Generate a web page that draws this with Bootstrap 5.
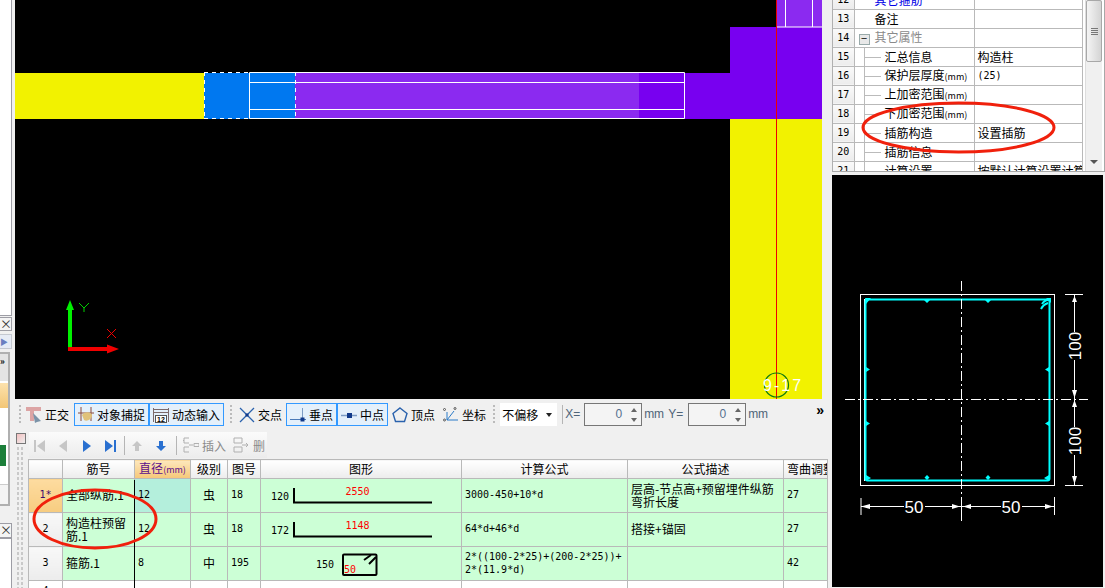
<!DOCTYPE html>
<html lang="zh-CN">
  <head>
    <meta charset="UTF-8" />
    <meta name="viewport" content="width=device-width, initial-scale=1.0" />
    <title>钢筋编辑</title>
    <link href="https://cdn.jsdelivr.net/npm/bootstrap@5.3.0/dist/css/bootstrap.min.css" rel="stylesheet" />
    <style>
      body { margin: 0; background: #f0f0f0; font-family: "Noto Sans CJK SC", "Liberation Sans", sans-serif; font-size: 12px; line-height: 13px; color: #000; }
      .app-frame { width: 1105px; height: 588px; overflow: hidden; background: #f0f0f0; }
      .app-marks { top: 0; left: 0; pointer-events: none; }
      .num { font-family: "DejaVu Sans Mono", "Noto Sans CJK SC", monospace; font-size: 10px; }

      /* left strip */
      .side-strip { width: 15px; flex: none; background: #f0f0f0; }
      .strip-white { height: 318px; width: 12px; background: #fff; border-right: 1px solid #9d9da5; border-bottom: 1px solid #9d9da5; }
      .strip-close { height: 15px; width: 12px; margin-top: 1px; background: #f4f4f4; border: 1px solid #9d9da5; border-left: 0; color: #333; font-size: 12px; line-height: 12px; text-align: center; }
      .strip-arrow { height: 15px; width: 12px; margin-top: 3px; background: #e6ebf5; border: 1px solid #c4c8d0; border-left: 0; color: #6a7fc0; font-size: 8px; line-height: 13px; }
      .strip-panel { height: 155px; width: 10px; margin-top: 3px; background: #fff; border: 2px solid #b0b0b0; border-left: 0; }
      .strip-more { height: 27px; background: #e4e4e4; font-size: 9px; line-height: 16px; font-weight: 700; }
      .strip-orange { height: 25px; margin-top: 2px; background: linear-gradient(#fde2ad, #f3c676); }
      .strip-green { height: 21px; width: 6px; margin-top: 37px; background: #1c7f3a; }
      .strip-box { height: 20px; margin-top: 18px; background: #f4f4f4; border-top: 1px solid #ccc; }
      .strip-close2 { margin-top: 17px; }
      .strip-white2 { height: 50px; width: 12px; background: #fff; border-right: 1px solid #9d9da5; border-top: 1px solid #9d9da5; }

      /* center */
      .center-col { width: 817px; flex: none; }
      .cad-view { display: block; background: #000; }
      .tool-row { height: 33px; padding: 0 0 2px 4px; }
      .grip { width: 2px; height: 19px; margin-right: 1px; flex: none; background-image: linear-gradient(#bbb 50%, transparent 50%); background-size: 2px 4px; }
      .grip-a { margin-left: 6px; margin-right: 3px; }
      .grip-b { margin-left: 3px; margin-right: 3px; }
      .tb-btn { height: 23px; padding: 0 3px; gap: 3px; border: 1px solid transparent; flex: none; white-space: nowrap; }
      .tb-btn.on { border-color: #3399ff; background: #e4f0fb; }
      .tb-first { margin-right: 1px; }
      .combo-box { width: 57px; height: 23px; margin-left: 2px; padding-left: 2px; background: #fff; flex: none; }
      .combo-caret { width: 0; height: 0; margin-left: auto; margin-right: 5px; border: 3px solid transparent; border-top: 4px solid #222; border-bottom: 0; }
      .tb-sep { width: 1px; height: 19px; background: #b5b5b5; flex: none; }
      .sep-combo { margin: 0 2px 0 5px; }
      .spin-box { width: 58px; height: 23px; border: 1px solid #777; background: #f4f4f4; color: #55708f; font-family: "Liberation Sans", sans-serif; font-size: 12px; flex: none; }
      .spin-value { flex: 1; text-align: right; padding-right: 4px; }
      .spin-arrows { width: 15px; gap: 6px; }
      .spin-up { width: 0; height: 0; border: 3px solid transparent; border-bottom: 4px solid #666; border-top: 0; }
      .spin-dn { width: 0; height: 0; border: 3px solid transparent; border-top: 4px solid #666; border-bottom: 0; }
      .unit-text { color: #4f6478; font-family: "Liberation Sans", sans-serif; font-size: 12px; flex: none; }
      .label-x { width: 19px; margin-right: 0; }
      .unit-mm { width: 26px; padding-left: 2px; }
      .label-y { width: 20px; }
      .unit-last { width: 70px; padding-left: 2px; }
      .more-chevron { font-size: 14px; font-weight: 700; margin-bottom: 8px; font-family: "Liberation Sans", sans-serif; }

      /* grid panel */
      .grid-panel { height: 156px; }
      .dock-side { width: 13px; flex: none; padding: 1px 0 0 1px; }
      .dock-close { width: 10px; height: 11px; background: linear-gradient(135deg, #f4c0c0, #eee); border: 1px solid #777; display: block; }
      .dock-dots { width: 9px; height: 150px; margin-top: 2px; background-image: radial-gradient(#c9c9c9 1px, transparent 1.2px); background-size: 4px 5px; }
      .grid-bar { width: 238px; height: 26px; margin: 0 0 1px 1px; padding-left: 2px; background: linear-gradient(#fbfbfb, #ececec); color: #8a8a8a; white-space: nowrap; }
      .bar-item { width: 24px; flex: none; }
      .bar-sep { margin: 0 6px 0 4px; }
      .bar-item-sm { width: 17px; }
      .bar-text { margin-left: 3px; margin-right: 7px; flex: none; }
      .bar-text-end { margin-left: 4px; flex: none; }

      .table.rebar-table { width: 799px; margin: 1px 0 0; table-layout: fixed; border-collapse: collapse; color: #000; }
      .table.rebar-table th, .table.rebar-table td { padding: 0 0 0 3px; height: 34px; border: 1px solid #b9b9b9; background: #ccffd6; color: #000; font-weight: 400; vertical-align: middle; overflow: hidden; line-height: 12.5px; box-shadow: none; }
      .table.rebar-table thead th { height: 19px; background: linear-gradient(#fff, #ececec); text-align: center; padding: 0; white-space: nowrap; }
      .table.rebar-table .th-hot { background: linear-gradient(#fde8bd, #f6c778); color: #5a0f8a; }
      .table.rebar-table .th-left { text-align: left; padding-left: 3px; }
      .table.rebar-table td.row-head { background: linear-gradient(#f8f8f8, #ececec); text-align: center; padding: 0; }
      .table.rebar-table td.row-hot { background: linear-gradient(#fddca0, #f7cc80); color: #3a0a6a; }
      .table.rebar-table td.cell-hot { background: #b4efdc; }
      .table.rebar-table td.cell-center { text-align: center; padding: 0; }
      .table.rebar-table td.cell-shape { padding: 0; }
      .table.rebar-table tr.row-blank td { background: #fff; vertical-align: top; padding-top: 4px; }
      .col-a { width: 34px; } .col-b { width: 72px; } .col-c { width: 56px; } .col-d { width: 37px; } .col-e { width: 33px; }
      .col-f { width: 201px; } .col-g { width: 166px; } .col-h { width: 156px; } .col-i { width: 44px; }
      .shape-svg { display: block; }
      .shape-svg text { font-family: "DejaVu Sans Mono", monospace; font-size: 10px; }
      .mm-small { font-size: 9px; }

      /* right */
      .right-col { width: 273px; flex: none; background: #f0f0f0; }
      .prop-wrap { height: 172px; overflow: hidden; background: #fff; border-left: 1px solid #b0b0b0; border-bottom: 1px solid #a8a8a8; border-right: 1px solid #a8a8a8; }
      .table.prop-table { width: 250px; margin: -10px 0 0; table-layout: fixed; border-collapse: collapse; flex: none; }
      .table.prop-table td { height: 19px; padding: 0 0 0 3px; border: 1px solid #b9b9b9; border-left: 0; border-top: 0; background: #fff; color: #000; white-space: nowrap; overflow: hidden; vertical-align: middle; box-shadow: none; }
      .table.prop-table td.prop-no { width: 21px; text-align: center; padding: 0; background: linear-gradient(#fafafa, #ececec); }
      .table.prop-table td.prop-name { width: 120px; padding-left: 20px; }
      .table.prop-table td.prop-group { padding-left: 20px; color: #8a8a8a; }
      .table.prop-table td.prop-link { color: #0000e6; }
      .table.prop-table td.prop-tree { padding-left: 30px; background-image: linear-gradient(#bbb, #bbb), linear-gradient(#bbb, #bbb); background-size: 1px 100%, 16px 1px; background-position: 9px 0, 10px 9px; background-repeat: no-repeat; }
      .minus-box { display: inline-block; width: 11px; height: 11px; margin: 0 5px 0 -16px; border: 1px solid #9aa; background: #e8e8e8; line-height: 7px; text-align: center; font-size: 11px; color: #000; vertical-align: -1px; }
      .prop-scroll { width: 17px; margin-left: 2px; flex: none; background: #f0f0f0; border-left: 1px solid #ddd; }
      .scroll-thumb { height: 62px; background: linear-gradient(90deg, #f4f4f4, #d4d4d4); border: 1px solid #a8a8a8; border-radius: 2px; gap: 1px; }
      .scroll-thumb i { display: block; width: 7px; height: 1px; background: #777; }
      .scroll-down { width: 0; height: 0; margin: auto auto 7px; border: 4px solid transparent; border-top: 4px solid #555; border-bottom: 0; }
      .section-view { display: block; margin-top: 3px; background: #000; }
      .section-view text { font-family: "Liberation Sans", sans-serif; font-size: 17px; fill: #fff; }
    </style>
  </head>
  <body>
    <div class="app-frame d-flex position-relative">

      <!-- left strip -->
      <div class="side-strip d-flex flex-column">
        <div class="strip-white"></div>
        <div class="strip-close">×</div>
        <div class="strip-arrow">▶</div>
        <div class="strip-panel">
          <div class="strip-more">»</div>
          <div class="strip-orange"></div>
          <div class="strip-green"></div>
          <div class="strip-box"></div>
        </div>
        <div class="strip-close strip-close2">×</div>
        <div class="strip-white2"></div>
      </div>

      <!-- center -->
      <div class="center-col d-flex flex-column">
        <svg class="cad-view" width="807" height="399" viewBox="15 0 807 399">
          <rect x="15" y="73" width="189" height="46" fill="#f2f200" />
          <rect x="204" y="73" width="91" height="46" fill="#0078f0" />
          <rect x="295" y="73" width="344" height="46" fill="#8b2af0" />
          <rect x="639" y="73" width="183" height="46" fill="#7800f0" />
          <rect x="730" y="27" width="92" height="46" fill="#7800f0" />
          <rect x="730" y="119" width="92" height="280" fill="#f2f200" />
          <rect x="776" y="0" width="46" height="27" fill="#8b2af0" />
          <g fill="none" stroke="#fff" stroke-width="1">
            <path d="M249.5 72.5H684.5V118.5H249.5Z M249.5 82.5H684.5 M249.5 109.5H684.5" />
            <path d="M204 72.5H249 M204 118.5H249 M204.5 72V119 M295.5 72V119" stroke-dasharray="4 4" />
            <path d="M785.5 0V27 M812.5 0V27 M776 27H822" />
          </g>
          <path d="M776.5 0V399" stroke="#f00000" stroke-width="1" />
          <circle cx="776.5" cy="385" r="12" fill="none" stroke="#0f7a0f" stroke-width="1.200" />
          <text x="763" y="391" font-family="Liberation Sans" font-size="16" letter-spacing="2" fill="#fff">9-17</text>
          <path d="M68 349V308H72V349Z M66 310L70 300L74 310Z" fill="#00f000" />
          <path d="M68 347H107V351H68Z M107 344.500L119 349L107 353.500Z" fill="#f00000" />
          <path d="M79 303L84 308L89 303 M84 308V312" stroke="#00d000" fill="none" />
          <path d="M107 329L116 338 M116 329L107 338" stroke="#f00000" fill="none" />
        </svg>

        <!-- snap toolbar -->
        <div class="tool-row d-flex align-items-center">
          <span class="grip"></span>
          <div class="tb-btn tb-first d-flex align-items-center">
            <svg width="16" height="16" viewBox="0 0 16 16"><path d="M0 0H15V4H8V14H4V4H0Z" fill="#dca4a4" /><path d="M7 6L15 14L11 15L9 16Z" fill="#7b93a8" /></svg>
            <span>正交</span>
          </div>
          <div class="tb-btn on d-flex align-items-center">
            <svg width="16" height="16" viewBox="0 0 16 16"><path d="M3 0V14 M13 0V14 M0 6H16" stroke="#8a4a3a" fill="none" /><path d="M4 8C7 4 13 5 14 8C14 12 9 15 6 13Z" fill="#e0c27a" /></svg>
            <span>对象捕捉</span>
          </div>
          <div class="tb-btn on d-flex align-items-center">
            <svg width="16" height="16" viewBox="0 0 16 16"><path d="M0.500 1V15 M15.500 1V15 M0 2.500H16 M0 5.500H16" stroke="#7d6a6a" fill="none" /><rect x="2.500" y="8.500" width="11" height="7" fill="#fff" stroke="#555" /><text x="8" y="14.500" font-size="7" font-weight="700" text-anchor="middle" font-family="Liberation Sans">12</text></svg>
            <span>动态输入</span>
          </div>
          <span class="grip grip-a"></span>
          <div class="tb-btn d-flex align-items-center">
            <svg width="16" height="16" viewBox="0 0 16 16"><path d="M1 1L15 15 M15 1L1 15" stroke="#2a62ad" stroke-width="1.300" /><rect x="6.500" y="6.500" width="3" height="3" fill="#123a8a" /></svg>
            <span>交点</span>
          </div>
          <div class="tb-btn on d-flex align-items-center">
            <svg width="16" height="16" viewBox="0 0 16 16"><path d="M0 12.500H16" stroke="#4a7ab8" /><path d="M12.500 1V12" stroke="#7d9cc4" /><rect x="10.500" y="10.500" width="4" height="4" fill="#123a8a" /></svg>
            <span>垂点</span>
          </div>
          <div class="tb-btn on d-flex align-items-center">
            <svg width="16" height="16" viewBox="0 0 16 16"><path d="M0 8.500H16" stroke="#7d9cc4" stroke-width="1.500" /><rect x="6" y="6" width="5" height="5" fill="#123a8a" /></svg>
            <span>中点</span>
          </div>
          <div class="tb-btn d-flex align-items-center">
            <svg width="16" height="16" viewBox="0 0 16 16"><path d="M8 1L15 6.500L12.500 14.500H3.500L1 6.500Z" fill="none" stroke="#2a62ad" stroke-width="1.400" /></svg>
            <span>顶点</span>
          </div>
          <div class="tb-btn d-flex align-items-center">
            <svg width="16" height="16" viewBox="0 0 16 16"><path d="M4 5V13H15 M4 13L11 4" stroke="#2a7ac8" fill="none" /><g fill="none" stroke="#555"><circle cx="1.500" cy="2.500" r="1" /><circle cx="12" cy="1.500" r="1" /><circle cx="1.500" cy="13" r="1" /></g></svg>
            <span>坐标</span>
          </div>
          <span class="grip grip-b"></span>
          <div class="combo-box d-flex align-items-center"><span>不偏移</span><span class="combo-caret"></span></div>
          <span class="tb-sep sep-combo"></span>
          <span class="unit-text label-x">X=</span>
          <div class="spin-box d-flex align-items-center"><span class="spin-value">0</span><span class="spin-arrows d-flex flex-column align-items-center"><i class="spin-up"></i><i class="spin-dn"></i></span></div>
          <span class="unit-text unit-mm">mm</span>
          <span class="unit-text label-y">Y=</span>
          <div class="spin-box d-flex align-items-center"><span class="spin-value">0</span><span class="spin-arrows d-flex flex-column align-items-center"><i class="spin-up"></i><i class="spin-dn"></i></span></div>
          <span class="unit-text unit-last">mm</span>
          <span class="more-chevron">»</span>
        </div>

        <!-- rebar grid -->
        <div class="grid-panel d-flex">
          <div class="dock-side">
            <span class="dock-close"></span>
            <div class="dock-dots"></div>
          </div>
          <div>
            <div class="grid-bar d-flex align-items-center">
              <span class="bar-item"><svg width="16" height="14" viewBox="0 0 16 14"><path d="M3 1H5V13H3Z M14 1V13L6 7Z" fill="#c6c6c6" /></svg></span>
              <span class="bar-item"><svg width="16" height="14" viewBox="0 0 16 14"><path d="M12 1V13L4 7Z" fill="#c6c6c6" /></svg></span>
              <span class="bar-item"><svg width="16" height="14" viewBox="0 0 16 14"><path d="M4 1V13L12 7Z" fill="#2a70d0" /></svg></span>
              <span class="bar-item bar-item-sm"><svg width="16" height="14" viewBox="0 0 16 14"><path d="M2 1V13L10 7Z M11 1H13V13H11Z" fill="#2a70d0" /></svg></span>
              <span class="tb-sep bar-sep"></span>
              <span class="bar-item"><svg width="12" height="12" viewBox="0 0 12 12"><path d="M6 1L11 6H8V11H4V6H1Z" fill="#c6c6c6" /></svg></span>
              <span class="bar-item bar-item-sm"><svg width="12" height="12" viewBox="0 0 12 12"><path d="M6 11L11 6H8V1H4V6H1Z" fill="#2a70d0" /></svg></span>
              <span class="tb-sep bar-sep"></span>
              <svg width="16" height="16" viewBox="0 0 16 16"><path d="M6 1H1V6H6 M1 3.500H0 M6 10H1V15H6 M6 8H10 M11 6.500H16V9.500H11Z" fill="none" stroke="#b0b0b0" /></svg>
              <span class="bar-text">插入</span>
              <svg width="16" height="16" viewBox="0 0 16 16"><path d="M1 1H9V6H1Z M1 10H9V15H1Z M9 8H15 M13 6L15 8L13 10" fill="none" stroke="#b0b0b0" /></svg>
              <span class="bar-text-end">删</span>
            </div>
            <table class="table rebar-table">
              <thead>
                <tr>
                  <th class="col-a"></th>
                  <th class="col-b">筋号</th>
                  <th class="col-c th-hot">直径<span class="mm-small">(mm)</span></th>
                  <th class="col-d">级别</th>
                  <th class="col-e">图号</th>
                  <th class="col-f">图形</th>
                  <th class="col-g">计算公式</th>
                  <th class="col-h">公式描述</th>
                  <th class="col-i th-left">弯曲调整</th>
                </tr>
              </thead>
              <tbody>
                <tr>
                  <td class="row-head row-hot num">1*</td>
                  <td>全部纵筋.1</td>
                  <td class="cell-hot num">12</td>
                  <td class="cell-center">虫</td>
                  <td class="num">18</td>
                  <td class="cell-shape">
                    <svg class="shape-svg" width="200" height="33" viewBox="0 0 200 33">
                      <text x="10" y="21">120</text>
                      <path d="M33 9V23.500H171" fill="none" stroke="#000" stroke-width="2" />
                      <text x="96.500" y="16" fill="#f00" text-anchor="middle">2550</text>
                    </svg>
                  </td>
                  <td class="num">3000-450+10*d</td>
                  <td>层高-节点高+预留埋件纵筋弯折长度</td>
                  <td class="num">27</td>
                </tr>
                <tr>
                  <td class="row-head num">2</td>
                  <td>构造柱预留筋.1</td>
                  <td class="num">12</td>
                  <td class="cell-center">虫</td>
                  <td class="num">18</td>
                  <td class="cell-shape">
                    <svg class="shape-svg" width="200" height="33" viewBox="0 0 200 33">
                      <text x="10" y="21">172</text>
                      <path d="M33 9V23.500H171" fill="none" stroke="#000" stroke-width="2" />
                      <text x="96.500" y="16" fill="#f00" text-anchor="middle">1148</text>
                    </svg>
                  </td>
                  <td class="num">64*d+46*d</td>
                  <td>搭接+锚固</td>
                  <td class="num">27</td>
                </tr>
                <tr>
                  <td class="row-head num">3</td>
                  <td>箍筋.1</td>
                  <td class="num">8</td>
                  <td class="cell-center">中</td>
                  <td class="num">195</td>
                  <td class="cell-shape">
                    <svg class="shape-svg" width="200" height="33" viewBox="0 0 200 33">
                      <text x="55" y="21">150</text>
                      <rect x="82" y="7.500" width="33.500" height="20.500" rx="1" fill="none" stroke="#000" stroke-width="2" />
                      <path d="M103 13L110 8 M108 17L115 10" fill="none" stroke="#000" stroke-width="2" />
                      <text x="83" y="26" fill="#f00" font-size="12">50</text>
                    </svg>
                  </td>
                  <td class="num">2*((100-2*25)+(200-2*25))+<br />2*(11.9*d)</td>
                  <td></td>
                  <td class="num">42</td>
                </tr>
                <tr class="row-blank">
                  <td class="row-head num">4</td>
                  <td></td><td></td><td></td><td></td><td></td><td></td><td></td><td></td>
                </tr>
              </tbody>
            </table>
          </div>
        </div>
      </div>

      <!-- right -->
      <div class="right-col d-flex flex-column">
        <div class="prop-wrap d-flex">
          <table class="table prop-table">
            <tbody>
              <tr><td class="prop-no num">12</td><td class="prop-name prop-link">其它箍筋</td><td></td></tr>
              <tr><td class="prop-no num">13</td><td class="prop-name">备注</td><td></td></tr>
              <tr><td class="prop-no num">14</td><td class="prop-group"><span class="minus-box">−</span>其它属性</td><td></td></tr>
              <tr><td class="prop-no num">15</td><td class="prop-tree">汇总信息</td><td>构造柱</td></tr>
              <tr><td class="prop-no num">16</td><td class="prop-tree">保护层厚度<span class="mm-small">(mm)</span></td><td class="num">(25)</td></tr>
              <tr><td class="prop-no num">17</td><td class="prop-tree">上加密范围<span class="mm-small">(mm)</span></td><td></td></tr>
              <tr><td class="prop-no num">18</td><td class="prop-tree">下加密范围<span class="mm-small">(mm)</span></td><td></td></tr>
              <tr><td class="prop-no num">19</td><td class="prop-tree">插筋构造</td><td>设置插筋</td></tr>
              <tr><td class="prop-no num">20</td><td class="prop-tree">插筋信息</td><td></td></tr>
              <tr><td class="prop-no num">21</td><td class="prop-tree">计算设置</td><td>按默认计算设置计算</td></tr>
            </tbody>
          </table>
          <div class="prop-scroll d-flex flex-column">
            <div class="scroll-thumb d-flex flex-column align-items-center justify-content-center"><i></i><i></i><i></i><i></i></div>
            <div class="scroll-down"></div>
          </div>
        </div>
        <svg class="section-view" width="271" height="412" viewBox="832 176 271 412">
          <rect x="860.500" y="295.500" width="194" height="191" fill="none" stroke="#fff" />
          <path d="M864.500 300V482" stroke="#fff" />
          <rect x="865.500" y="300.500" width="184" height="181" rx="2" fill="none" stroke="#00ffff" stroke-width="2" />
          <g fill="#00ffff">
            <path d="M865 299H871L866 305Z M1046 299H1051V304Z" />
            <path d="M924 301H930L927 304Z M985 301H991L988 304Z" />
            <path d="M866 368L870 370.500L866 373Z M1049 368L1045 370.500L1049 373Z" />
            <path d="M866 422L870 424.500L866 427Z M1049 422L1045 424.500L1049 427Z" />
            <path d="M927 476L929.500 478.500L927 481L924.500 478.500Z M988 476L990.500 478.500L988 481L985.500 478.500Z" />
            <path d="M866 476L871 479L866 482Z M1049 476L1044 479L1049 482Z" />
          </g>
          <path d="M1042 305C1044 302 1046 301 1048 301 M1041 310C1043 306 1045 305 1048 304" fill="none" stroke="#00ffff" stroke-width="2" />
          <g stroke="#fff" fill="none">
            <path d="M961.500 282V522" stroke-dasharray="10 3 2 3" />
            <path d="M845 400.500H1088" stroke-dasharray="10 3 2 3" />
            <path d="M1065 295.500H1083 M1065 486.500H1083 M1074.500 296V333 M1074.500 361V428 M1074.500 456V486" />
            <path d="M861 499V516 M1054.500 498V516 M961.500 499V516 M861 507.500H904 M925 507.500H1001 M1022 507.500H1054" />
          </g>
          <g fill="#fff">
            <path d="M1074.500 297L1077 303H1072Z M1074.500 399L1077 391H1072Z M1074.500 401L1077 408H1072Z M1074.500 485L1077 477H1072Z" />
            <path d="M861 507.500L870 505V510Z M960 507.500L952 505V510Z M963 507.500L971 505V510Z M1053 507.500L1045 505V510Z" />
          </g>
          <text x="914" y="514" text-anchor="middle">50</text>
          <text x="1011" y="514" text-anchor="middle">50</text>
          <text transform="translate(1080.500 347) rotate(-90)" text-anchor="middle">100</text>
          <text transform="translate(1080.500 442) rotate(-90)" text-anchor="middle">100</text>
        </svg>
      </div>

      <!-- hand drawn marks over the screen -->
      <svg class="app-marks position-absolute" width="1105" height="588" viewBox="0 0 1105 588">
        <path d="M134.500 480V588" stroke="#000" stroke-width="1" />
        <ellipse cx="95" cy="519" rx="61" ry="29" fill="none" stroke="#f0200c" stroke-width="3" />
        <ellipse cx="958.500" cy="127.500" rx="95.500" ry="24.500" fill="none" stroke="#f0200c" stroke-width="3" />
      </svg>
    </div>
    <script src="https://cdn.jsdelivr.net/npm/bootstrap@5.3.0/dist/js/bootstrap.bundle.min.js"></script>
  </body>
</html>
